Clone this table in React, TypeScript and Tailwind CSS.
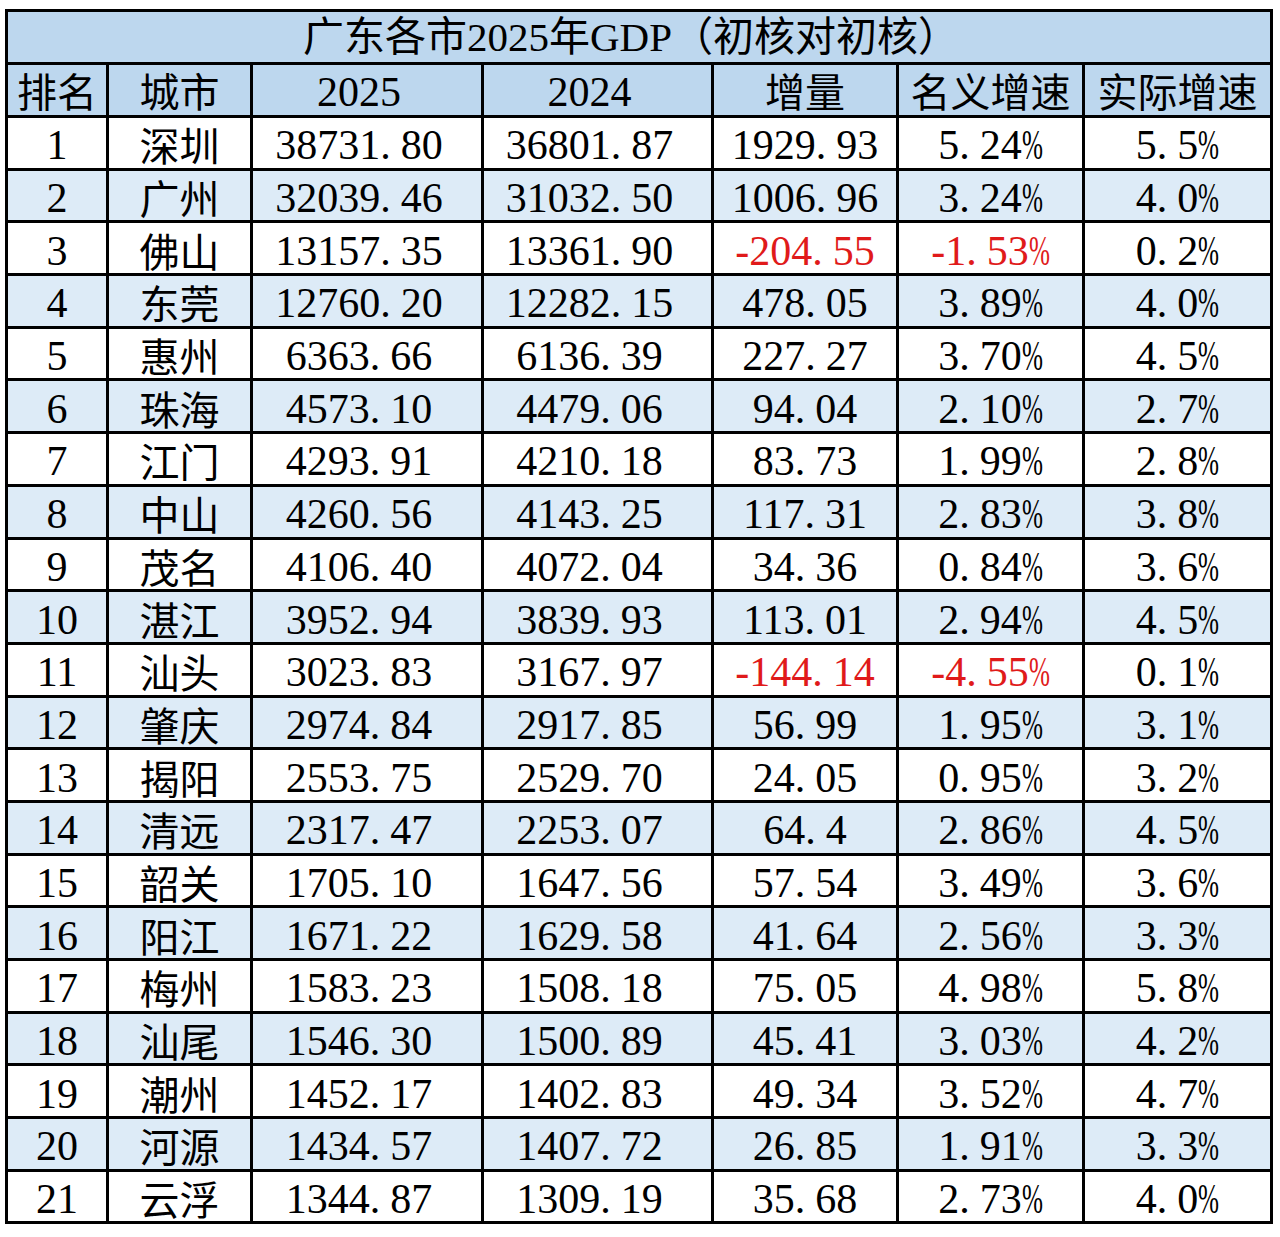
import React from 'react';

const rows: [string, string, string, string, string, string, string][] = [
  ['1', '深圳', '38731.80', '36801.87', '1929.93', '5.24%', '5.5%'],
  ['2', '广州', '32039.46', '31032.50', '1006.96', '3.24%', '4.0%'],
  ['3', '佛山', '13157.35', '13361.90', '-204.55', '-1.53%', '0.2%'],
  ['4', '东莞', '12760.20', '12282.15', '478.05', '3.89%', '4.0%'],
  ['5', '惠州', '6363.66', '6136.39', '227.27', '3.70%', '4.5%'],
  ['6', '珠海', '4573.10', '4479.06', '94.04', '2.10%', '2.7%'],
  ['7', '江门', '4293.91', '4210.18', '83.73', '1.99%', '2.8%'],
  ['8', '中山', '4260.56', '4143.25', '117.31', '2.83%', '3.8%'],
  ['9', '茂名', '4106.40', '4072.04', '34.36', '0.84%', '3.6%'],
  ['10', '湛江', '3952.94', '3839.93', '113.01', '2.94%', '4.5%'],
  ['11', '汕头', '3023.83', '3167.97', '-144.14', '-4.55%', '0.1%'],
  ['12', '肇庆', '2974.84', '2917.85', '56.99', '1.95%', '3.1%'],
  ['13', '揭阳', '2553.75', '2529.70', '24.05', '0.95%', '3.2%'],
  ['14', '清远', '2317.47', '2253.07', '64.4', '2.86%', '4.5%'],
  ['15', '韶关', '1705.10', '1647.56', '57.54', '3.49%', '3.6%'],
  ['16', '阳江', '1671.22', '1629.58', '41.64', '2.56%', '3.3%'],
  ['17', '梅州', '1583.23', '1508.18', '75.05', '4.98%', '5.8%'],
  ['18', '汕尾', '1546.30', '1500.89', '45.41', '3.03%', '4.2%'],
  ['19', '潮州', '1452.17', '1402.83', '49.34', '3.52%', '4.7%'],
  ['20', '河源', '1434.57', '1407.72', '26.85', '1.91%', '3.3%'],
  ['21', '云浮', '1344.87', '1309.19', '35.68', '2.73%', '4.0%'],
];

// SimSun-ish number look: wide period, narrow percent sign
function Num({ v }: { v: string }) {
  return (
    <span className="font-['Liberation_Serif',serif] text-[42px] leading-none">
      {v.split('').map((c, i) =>
        c === '.' ? (
          <span key={i} className="mr-[10px]">.</span>
        ) : c === '%' ? (
          <span key={i} className="inline-block origin-left scale-x-[0.6] mr-[-14px]">%</span>
        ) : (
          <span key={i}>{c}</span>
        )
      )}
    </span>
  );
}

const cjk = "font-['Noto_Sans_CJK_SC',sans-serif] text-[40px] leading-none";

export default function App() {
  return (
    <div className="w-[1280px] h-[1237px] bg-white pt-[9px] pl-[5px] text-black">
      <div className="grid grid-cols-[98px_141px_228px_227px_182px_183px_185px] gap-[3px] bg-black p-[3px] w-fit">
        <div className="col-span-7 h-[50px] bg-[#bdd7ee] flex items-center justify-center pr-4 font-['Liberation_Serif','Noto_Sans_CJK_SC',serif] text-[41px] leading-none">
          广东各市2025年GDP（初核对初核）
        </div>

        {['排名', '城市'].map((h) => (
          <div key={h} className={`h-[50px] bg-[#bdd7ee] flex items-center justify-center ${cjk}`}>{h}</div>
        ))}
        <div className="h-[50px] bg-[#bdd7ee] flex items-center justify-center pr-4 pt-[4px]"><Num v="2025" /></div>
        <div className="h-[50px] bg-[#bdd7ee] flex items-center justify-center pr-4 pt-[4px]"><Num v="2024" /></div>
        {['增量', '名义增速', '实际增速'].map((h) => (
          <div key={h} className={`h-[50px] bg-[#bdd7ee] flex items-center justify-center ${cjk}`}>{h}</div>
        ))}

        {rows.map((r, i) => {
          const bg = i % 2 === 1 ? 'bg-[#ddebf7]' : 'bg-white';
          const neg = r[4].startsWith('-');
          return (
            <React.Fragment key={r[0]}>
              <div className={`h-[49.7px] ${bg} flex items-center justify-center pt-[5px]`}><Num v={r[0]} /></div>
              <div className={`h-[49.7px] ${bg} flex items-center justify-center pt-[3px] ${cjk}`}>{r[1]}</div>
              <div className={`h-[49.7px] ${bg} flex items-center justify-center pt-[5px] pr-4`}><Num v={r[2]} /></div>
              <div className={`h-[49.7px] ${bg} flex items-center justify-center pt-[5px] pr-4`}><Num v={r[3]} /></div>
              <div className={`h-[49.7px] ${bg} flex items-center justify-center pt-[5px] ${neg ? 'text-[#e01a1a]' : ''}`}><Num v={r[4]} /></div>
              <div className={`h-[49.7px] ${bg} flex items-center justify-center pt-[5px] ${neg ? 'text-[#e01a1a]' : ''}`}><Num v={r[5]} /></div>
              <div className={`h-[49.7px] ${bg} flex items-center justify-center pt-[5px]`}><Num v={r[6]} /></div>
            </React.Fragment>
          );
        })}
      </div>
    </div>
  );
}
